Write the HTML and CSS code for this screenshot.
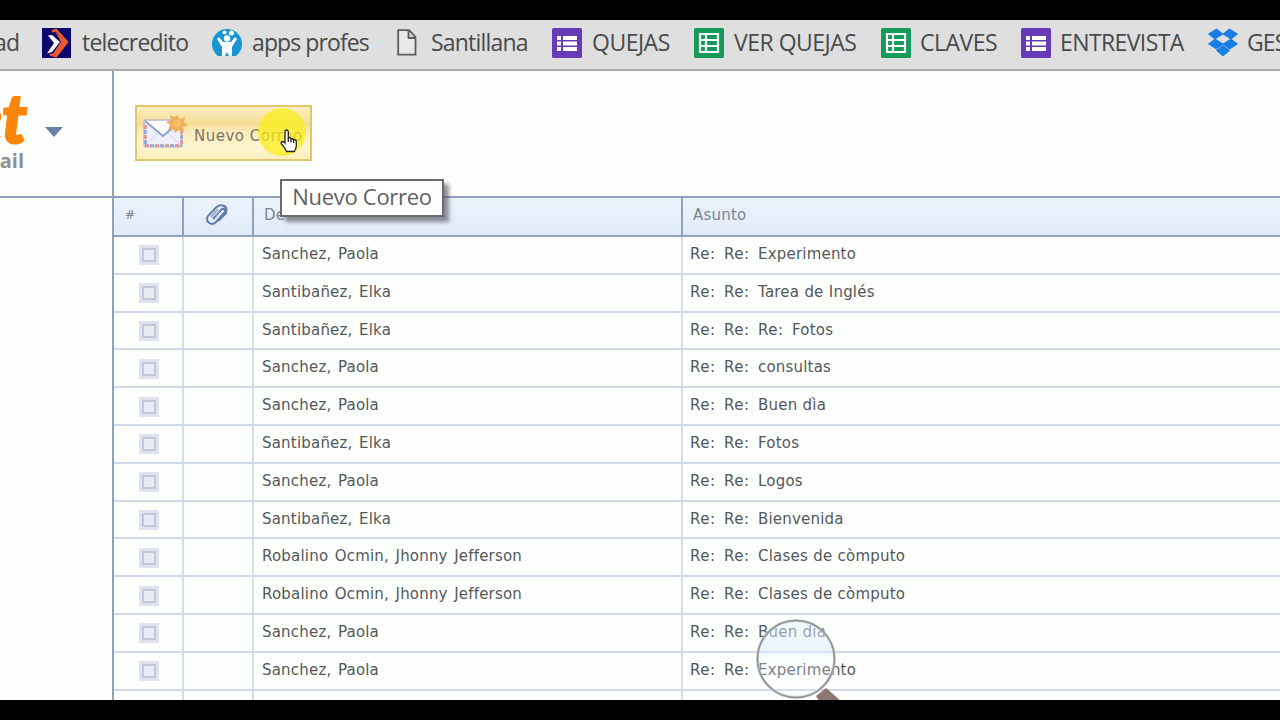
FILE: index.html
```html
<!DOCTYPE html>
<html lang="es">

<head>
    <meta charset="UTF-8">
    <meta name="viewport" content="width=device-width, initial-scale=1.0">
    <title>Correo</title>
    <link rel="stylesheet" href="styles.css">
</head>

<body>
    <!-- shared icons -->
    <svg width="0" height="0" class="defs">
        <symbol id="form" viewBox="0 0 30 30">
            <rect width="30" height="30" rx="1.5" fill="#673ab7"/>
            <path d="M5 8h4v4H5zM11 8h14v4H11zM5 13.500h4v4H5zM11 13.500h14v4H11zM5 19h4v4H5zM11 19h14v4H11z" fill="#fff"/>
        </symbol>
        <symbol id="sheet" viewBox="0 0 30 30">
            <rect width="30" height="30" rx="1.5" fill="#159a5a"/>
            <path d="M6 6h18v18H6zM6 12h18M6 18h18M12 6v18" fill="none" stroke="#fff" stroke-width="2.200"/>
        </symbol>
    </svg>

    <nav class="bookmarks">
        <a class="bookmark cut">ad</a>
        <a class="bookmark">
            <svg width="29" height="30" viewBox="0 0 29 30">
                <rect width="29" height="30" fill="#0b0870"/>
                <path d="M10 3.500l4-1.500 11 12-11 14-6-1.500" fill="none" stroke="#ee5a2e" stroke-width="2.500"/>
                <path d="M13 3l11 11-11 14-3-1 9-13z" fill="#ee5a2e"/>
                <path d="M6 7.500l4-.5 8 7-8 10-5 1.500 7-10.500z" fill="#fff"/>
            </svg>
            <span class="t1">telecredito</span>
        </a>
        <a class="bookmark">
            <svg width="30" height="30" viewBox="0 0 30 30">
                <path d="M6 28A15 15 0 1 1 24 28z" fill="#1795d3"/>
                <circle cx="15" cy="10.500" r="3.200" fill="#fff"/>
                <path d="M7 9l4 5h8l4-5 2 2-5 8v9h-3l-2-4-2 4h-3v-9L5 11z" fill="#fff"/>
                <circle cx="12.500" cy="4.500" r="2" fill="#fff"/>
                <circle cx="19.500" cy="5" r="2.500" fill="#fff"/>
            </svg>
            <span class="t2">apps profes</span>
        </a>
        <a class="bookmark page">
            <svg width="20" height="28" viewBox="0 0 20 28">
                <path d="M1.200 1.200h11l6.300 7v17.500H1.200zM11.500 1.500V9h7" fill="#e8e9e8" stroke="#5d5d5d" stroke-width="1.800"/>
            </svg>
            <span class="t3">Santillana</span>
        </a>
        <a class="bookmark"><svg width="30" height="30"><use href="#form"/></svg><span class="t4">QUEJAS</span></a>
        <a class="bookmark"><svg width="30" height="30"><use href="#sheet"/></svg><span class="t5">VER QUEJAS</span></a>
        <a class="bookmark"><svg width="30" height="30"><use href="#sheet"/></svg><span class="t6">CLAVES</span></a>
        <a class="bookmark"><svg width="30" height="30"><use href="#form"/></svg><span class="t7">ENTREVISTA</span></a>
        <a class="bookmark">
            <svg width="30" height="29" viewBox="0 0 30 29">
                <path d="M8.500 1L15 6 7 11 .5 6zM21.500 1L29.500 6 23 11l-8-5zM7 11l8 5-6.500 5L.5 16zM23 11l6.500 5-8 5-6.500-5zM15 17.500l6.500 5-6.500 5.500-6.500-5.500z" fill="#167ee6" stroke="#167ee6"/>
            </svg>
            <span class="t8">GES</span>
        </a>
    </nav>

    <div class="content">
        <aside class="sidebar">
            <div class="brand">
                <div class="logo">
                    <span class="logo-name">et</span>
                    <span class="logo-mail">ail</span>
                </div>
                <svg class="arrow" width="18" height="10" viewBox="0 0 18 10"><path d="M0 0h18L9 10z" fill="#6781a4"/></svg>
            </div>
        </aside>

        <main>
            <div class="toolbar">
                <button class="new-mail">
                    <svg width="46" height="38" viewBox="0 0 46 38">
                        <rect x="2" y="7" width="38" height="27" rx="1.500" fill="#eeeffa" stroke="#a5a7c6"/>
                        <path d="M3 8l18 15L39 8" fill="#fafaff" stroke="#8fa1c8" stroke-width="2"/>
                        <path d="M3 33l13-13M39 33L26 20" stroke="#d5d9ec"/>
                        <path d="M3 32.500h37M3.500 12v20M39.500 17v15" fill="none" stroke="#e29090" stroke-width="2.500" stroke-dasharray="4 6"/>
                        <path d="M8 32.500h32M3.500 17v15M39.500 22v10" fill="none" stroke="#8ba6d6" stroke-width="2.500" stroke-dasharray="4 6"/>
                        <path d="M35 2l3 4 5-2-1 5 4 3-5 2 1 5-5-2-4 3-2-4-5 1 2-5-4-3 5-2-1-5 5 2z" fill="#eeb05c"/>
                        <circle cx="35" cy="10.500" r="4" fill="#f5bd63"/>
                    </svg>
                    <span>Nuevo Correo</span>
                </button>
                <div class="halo"></div>
                <svg class="hand" width="18" height="24" viewBox="0 0 18 24">
                    <path d="M5 14V3q0-2 1.600-2T8.300 3v6q1.500-1 2.700.8 1.600-.8 2.600.9 2.400-.4 2.700 2V17q-.3 3-2 5.500H6.500Q5 18.500 1.500 15q-1-2 .8-2.500Q4 12.500 5 14z" fill="#fff" stroke="#222" stroke-width="1.300"/>
                    <path d="M8.300 9v4M11 10v3.500M13.600 11v3" stroke="#222" stroke-width="1.200"/>
                </svg>
                <div class="tooltip">Nuevo Correo</div>
            </div>

            <div class="mails">
                <div class="row head">
                    <div class="num">#</div>
                    <div class="clip">
                        <svg width="24" height="22" viewBox="0 0 24 22">
                            <path d="M8 15l8-9q2-2 3.500-.5T19 9l-8 9q-3.500 3.500-7 .8T3 12l8-8.500q4-3.500 8-1.500t1.500 8L13 17" fill="none" stroke="#617ca8" stroke-width="2"/>
                            <path d="M6 13l7-8M10 12l5-5" stroke="#8ea5c8" stroke-width="1.500"/>
                        </svg>
                    </div>
                    <div>De</div>
                    <div>Asunto</div>
                </div>
                <div class="row"><div><i class="check"></i></div><div></div><div>Sanchez, Paola</div><div><span class="re">Re: Re: </span>Experimento</div></div>
                <div class="row"><div><i class="check"></i></div><div></div><div>Santibañez, Elka</div><div><span class="re">Re: Re: </span>Tarea de Inglés</div></div>
                <div class="row"><div><i class="check"></i></div><div></div><div>Santibañez, Elka</div><div><span class="re">Re: Re: Re: </span>Fotos</div></div>
                <div class="row"><div><i class="check"></i></div><div></div><div>Sanchez, Paola</div><div><span class="re">Re: Re: </span>consultas</div></div>
                <div class="row"><div><i class="check"></i></div><div></div><div>Sanchez, Paola</div><div><span class="re">Re: Re: </span>Buen dìa</div></div>
                <div class="row"><div><i class="check"></i></div><div></div><div>Santibañez, Elka</div><div><span class="re">Re: Re: </span>Fotos</div></div>
                <div class="row"><div><i class="check"></i></div><div></div><div>Sanchez, Paola</div><div><span class="re">Re: Re: </span>Logos</div></div>
                <div class="row"><div><i class="check"></i></div><div></div><div>Santibañez, Elka</div><div><span class="re">Re: Re: </span>Bienvenida</div></div>
                <div class="row"><div><i class="check"></i></div><div></div><div>Robalino Ocmin, Jhonny Jefferson</div><div><span class="re">Re: Re: </span>Clases de còmputo</div></div>
                <div class="row"><div><i class="check"></i></div><div></div><div>Robalino Ocmin, Jhonny Jefferson</div><div><span class="re">Re: Re: </span>Clases de còmputo</div></div>
                <div class="row"><div><i class="check"></i></div><div></div><div>Sanchez, Paola</div><div><span class="re">Re: Re: </span>Buen dìa</div></div>
                <div class="row"><div><i class="check"></i></div><div></div><div>Sanchez, Paola</div><div><span class="re">Re: Re: </span>Experimento</div></div>
                <div class="row"><div></div><div></div><div></div><div></div></div>
            </div>
        </main>
    </div>

    <svg class="lens" width="84" height="82" viewBox="0 0 84 82">
        <defs>
            <linearGradient id="glass" x1="0" y1="0" x2="0" y2="1">
                <stop offset="0" stop-color="#e4f1fc" stop-opacity=".4"/>
                <stop offset=".42" stop-color="#dceefd" stop-opacity=".6"/>
                <stop offset=".5" stop-color="#f4f8fc" stop-opacity=".3"/>
                <stop offset="1" stop-color="#fff" stop-opacity=".15"/>
            </linearGradient>
        </defs>
        <path d="M61 78l10-8 14 12v4H66z" fill="#8d7871"/>
        <circle cx="41" cy="41" r="38.500" fill="url(#glass)" stroke="#d3d5d6" stroke-width="3"/>
        <circle cx="41" cy="41" r="38.500" fill="none" stroke="#8e9294" stroke-width="1.600"/>
    </svg>
</body>

</html>
```
FILE: styles.css
```css
body {
    margin: 0;
    padding: 20px 0;
    box-sizing: border-box;
    height: 720px;
    display: flex;
    flex-direction: column;
    overflow: hidden;
    background-color: #000;
    font-family: "DejaVu Sans", Verdana, sans-serif;
    color: #54575b;
}

.defs {
    position: absolute;
}

/* bookmarks bar */
.bookmarks {
    display: grid;
    grid-template-columns: 42px 170px 185px 155px 142px 187px 140px 187px 110px;
    height: 51px;
    flex: none;
    box-sizing: border-box;
    border-bottom: 2px solid #a9abaa;
    background-color: #dedfde;
    font-family: "Open Sans", sans-serif;
    font-size: 23px;
    color: #484a4b;
    overflow: hidden;
}

.bookmark {
    display: flex;
    align-items: center;
    gap: 10px;
    height: 45px;
    white-space: nowrap;
}

.bookmark svg {
    flex: none;
}

.bookmark span {
    margin-top: -2px;
}

.cut {
    height: 43px;
    margin-left: -6px;
    letter-spacing: -0.8px;
}

.page {
    gap: 14px;
}

.t1 { margin-left: 1px; letter-spacing: -0.8px; }
.t2 { letter-spacing: -0.9px; }
.t3 { letter-spacing: -0.8px; }
.t4 { letter-spacing: -0.5px; }
.t5 { letter-spacing: -0.5px; }
.t6 { margin-left: -1px; letter-spacing: -0.5px; }
.t7 { margin-left: -1px; letter-spacing: -0.6px; }
.t8 { margin-left: -1px; letter-spacing: -0.9px; }

/* page */
.content {
    display: flex;
    height: 629px;
    flex: none;
    overflow: hidden;
    background-color: #fdfffd;
}

.sidebar {
    width: 112px;
    flex: none;
    border-right: 2px solid #8fa1bf;
}

.brand {
    position: relative;
    height: 125px;
    border-bottom: 2px solid #8fa1bf;
    overflow: hidden;
}

.logo {
    position: absolute;
    right: 85px;
    top: 12px;
    display: flex;
    flex-direction: column;
    align-items: flex-end;
    font-family: "Open Sans", sans-serif;
    font-weight: bold;
}

.logo-name {
    font-family: Lato, sans-serif;
    font-weight: 900;
    font-style: italic;
    font-size: 68px;
    line-height: 68px;
    color: #fb860b;
    -webkit-text-stroke: 2px #fb860b;
}

.logo-mail {
    margin: -2px 3px 0 0;
    font-size: 20px;
    line-height: 24px;
    color: #8d9095;
}

.arrow {
    position: absolute;
    left: 45px;
    top: 56px;
}

main {
    flex: 1;
    min-width: 0;
}

.toolbar {
    position: relative;
    height: 125px;
    padding: 34px 0 0 21px;
    box-sizing: border-box;
}

.new-mail {
    display: flex;
    align-items: center;
    gap: 6px;
    width: 177px;
    height: 56px;
    padding: 0 0 2px 5px;
    border: 2px solid #e2c66c;
    background: linear-gradient(#fbeec5, #f6dc94 32%, #fbe9b8 45%, #fff5d2 75%, #fdeebb);
    font-family: "DejaVu Sans", Verdana, sans-serif;
    font-size: 15px;
    letter-spacing: 0.5px;
    color: #7c7462;
    white-space: nowrap;
}

.new-mail span {
    padding-top: 7px;
}

.halo {
    position: absolute;
    left: 144px;
    top: 37px;
    width: 48px;
    height: 48px;
    border-radius: 50%;
    background-color: rgba(250, 238, 20, 0.72);
}

.hand {
    position: absolute;
    left: 166px;
    top: 58px;
}

.tooltip {
    position: absolute;
    z-index: 1;
    left: 166px;
    top: 108px;
    width: 164px;
    height: 38px;
    box-sizing: border-box;
    border: 2px solid #6b6b6b;
    background-color: #fff;
    box-shadow: 5px 5px 4px rgba(70, 75, 85, 0.6);
    font-family: "Open Sans", sans-serif;
    font-size: 22px;
    letter-spacing: -0.3px;
    line-height: 31px;
    text-align: center;
    color: #5f5f5f;
    white-space: nowrap;
}

/* mail list */
.mails {
    font-size: 15px;
    letter-spacing: 0.2px;
}

.row {
    display: grid;
    grid-template-columns: 70px 70px 429px 1fr;
    height: 37.8px;
}

.row > div {
    box-sizing: border-box;
    padding: 0 0 0 8px;
    border-right: 2px solid #d5ddeb;
    border-bottom: 2px solid #d0d9e9;
    line-height: 35.5px;
    word-spacing: 1.5px;
    white-space: nowrap;
}

.row > div:last-child {
    padding-left: 7px;
    border-right: none;
    word-spacing: 0.3px;
}

.row > div:first-child {
    display: flex;
    align-items: center;
    justify-content: center;
    padding: 1px 0 0 1px;
}

.row .re {
    letter-spacing: 0.5px;
    word-spacing: 3.2px;
}

.head {
    height: 41px;
    background: linear-gradient(#edf3fc, #e0eaf8);
    color: #7b8593;
}

.row.head > div {
    border-top: 2px solid #8fa1bf;
    border-right-color: #8fa1bf;
    border-bottom-color: #8fa1bf;
    padding: 0 0 0 10px;
    line-height: 34px;
}

.row.head > .num {
    justify-content: flex-start;
    padding: 0 0 3px 11px;
    font-size: 12px;
    font-style: italic;
}

.row.head > .clip {
    display: flex;
    align-items: center;
    justify-content: center;
    padding: 0 2px 4px 0;
}

.check {
    width: 20px;
    height: 20px;
    box-sizing: border-box;
    border: 3px solid #e0e3ef;
    background-color: #e9ebf4;
    box-shadow: inset 0 0 0 2px #c3c7d8;
}

.lens {
    position: absolute;
    left: 755px;
    top: 618px;
}
```
